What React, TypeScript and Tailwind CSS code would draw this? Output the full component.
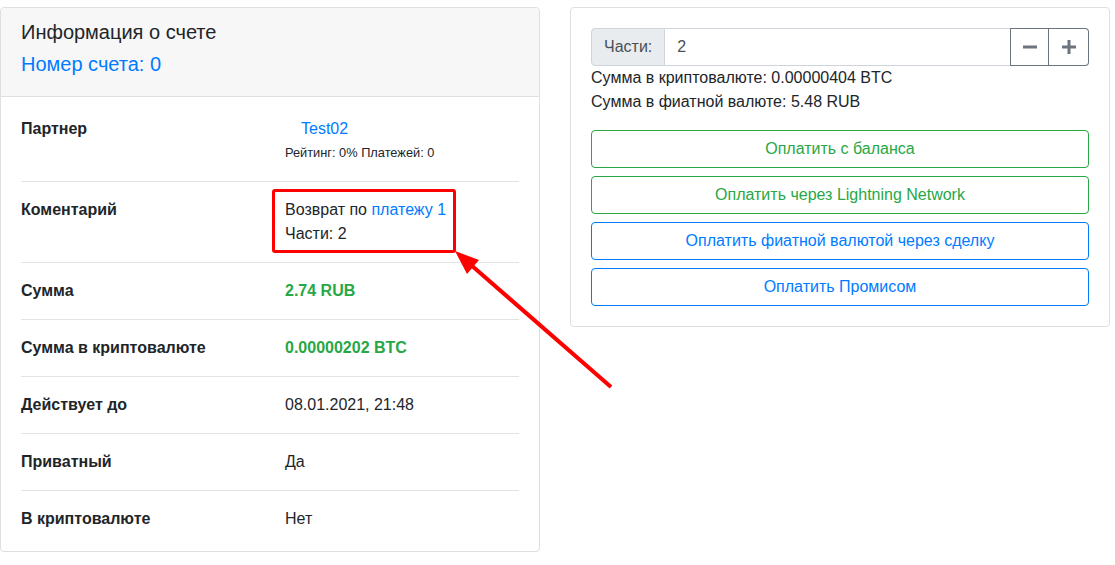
import { ReactNode } from "react";

interface InfoRowProps {
  label: string;
  children: ReactNode;
  first?: boolean;
}

function InfoRow({ label, children, first }: InfoRowProps) {
  return (
    <div
      className={`grid grid-cols-2 gap-[30px] py-4 ${first ? "" : "border-t border-[#e3e3e3]"}`}
    >
      <div className="font-bold leading-6">{label}</div>
      <div className="relative leading-6">{children}</div>
    </div>
  );
}

function MinusIcon() {
  return (
    <svg width="14" height="14" viewBox="0 0 14 14">
      <rect x="0" y="5.5" width="14" height="3" fill="#6c757d" />
    </svg>
  );
}

function PlusIcon() {
  return (
    <svg width="14" height="14" viewBox="0 0 14 14">
      <rect x="0" y="5.5" width="14" height="3" fill="#6c757d" />
      <rect x="5.5" y="0" width="3" height="14" fill="#6c757d" />
    </svg>
  );
}

const payButtons = [
  { label: "Оплатить с баланса", tone: "green" },
  { label: "Оплатить через Lightning Network", tone: "green" },
  { label: "Оплатить фиатной валютой через сделку", tone: "blue" },
  { label: "Оплатить Промисом", tone: "blue" },
];

export default function App() {
  return (
    <div
      className="relative w-[1115px] h-[565px] bg-white text-[#212529] text-base overflow-hidden"
      style={{ fontFamily: '"Liberation Sans", Arial, sans-serif' }}
    >
      <div className="flex items-start gap-[30px] pt-[7px]">
        {/* Invoice info card */}
        <div className="w-[540px] border border-[#dfdfdf] rounded bg-white">
          <div className="bg-[#f7f7f7] border-b border-[#dfdfdf] px-5 pt-3 pb-3 rounded-t">
            <div className="text-[20px] leading-6 mb-2">Информация о счете</div>
            <div className="text-[20px] leading-6 mb-2 text-[#007bff]">Номер счета: 0</div>
          </div>

          <div className="px-5 pt-1 pb-1">
            <InfoRow label="Партнер" first>
              <div className="pl-4 text-[#007bff]">Test02</div>
              <div className="text-[12.8px] leading-6">Рейтинг: 0% Платежей: 0</div>
            </InfoRow>
            <InfoRow label="Коментарий">
              <div>
                Возврат по <span className="text-[#007bff]">платежу 1</span>
              </div>
              <div>Части: 2</div>
              <div className="absolute left-[-13px] top-[-9px] w-[184px] h-[64px] border-[3px] border-[#ff0000] rounded-[3px] pointer-events-none" />
            </InfoRow>
            <InfoRow label="Сумма">
              <span className="font-bold text-[#28a745]">2.74 RUB</span>
            </InfoRow>
            <InfoRow label="Сумма в криптовалюте">
              <span className="font-bold text-[#28a745]">0.00000202 BTC</span>
            </InfoRow>
            <InfoRow label="Действует до">08.01.2021, 21:48</InfoRow>
            <InfoRow label="Приватный">Да</InfoRow>
            <InfoRow label="В криптовалюте">Нет</InfoRow>
          </div>
        </div>

        {/* Payment card */}
        <div className="w-[540px] border border-[#dfdfdf] rounded bg-white p-5">
          <div className="flex h-[38px]">
            <div className="flex items-center px-3 bg-[#e9ecef] border border-[#ced4da] rounded-l text-[#495057]">
              Части:
            </div>
            <div className="flex-1 flex items-center px-3 border-y border-[#ced4da] text-[#495057]">
              2
            </div>
            <button className="w-[39px] flex items-center justify-center border border-[#6c757d]">
              <MinusIcon />
            </button>
            <button className="w-[40px] flex items-center justify-center border border-l-0 border-[#6c757d] rounded-r">
              <PlusIcon />
            </button>
          </div>
          <div className="leading-6">Сумма в криптовалюте: 0.00000404 BTC</div>
          <div className="leading-6">Сумма в фиатной валюте: 5.48 RUB</div>

          <div className="flex flex-col gap-2 mt-4">
            {payButtons.map((b) => (
              <button
                key={b.label}
                className={`h-[38px] w-full rounded border text-center ${
                  b.tone === "green"
                    ? "border-[#28a745] text-[#28a745]"
                    : "border-[#007bff] text-[#007bff]"
                }`}
              >
                {b.label}
              </button>
            ))}
          </div>
        </div>
      </div>

      {/* Annotation arrow */}
      <svg
        className="absolute left-0 top-0 pointer-events-none"
        width="1115"
        height="565"
        viewBox="0 0 1115 565"
      >
        <line x1="611" y1="387" x2="471" y2="265" stroke="#ff0000" strokeWidth="4" />
        <polygon points="455,251 479,260 467,274" fill="#ff0000" />
      </svg>
    </div>
  );
}
